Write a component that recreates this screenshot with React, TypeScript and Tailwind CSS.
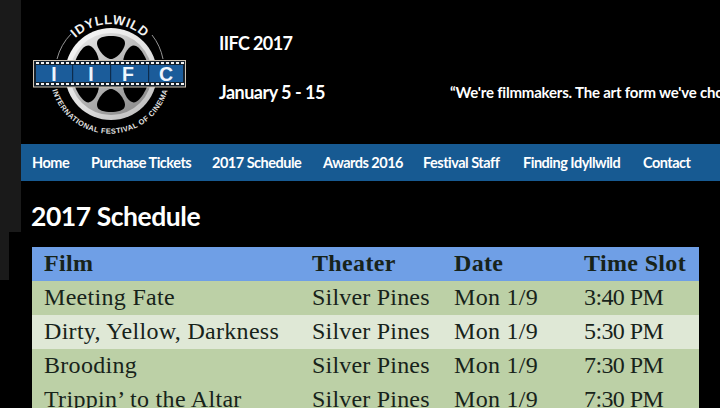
import React from "react";

const nav = [
  { label: "Home", w: "w-[59px]" },
  { label: "Purchase Tickets", w: "w-[121px]" },
  { label: "2017 Schedule", w: "w-[111px]" },
  { label: "Awards 2016", w: "w-[100px]" },
  { label: "Festival Staff", w: "w-[100px]" },
  { label: "Finding Idyllwild", w: "w-[120px]" },
  { label: "Contact", w: "w-[60px]" },
];

const rows = [
  { film: "Meeting Fate", time: "3:40 PM", bg: "bg-[#bcd0a6]" },
  { film: "Dirty, Yellow, Darkness", time: "5:30 PM", bg: "bg-[#dfe8d6]" },
  { film: "Brooding", time: "7:30 PM", bg: "bg-[#bcd0a6]" },
  { film: "Trippin’ to the Altar", time: "7:30 PM", bg: "bg-[#bcd0a6]" },
];

const HOLE = "M0,-15 C6,-15 14,-25 14,-31 C14,-37 6,-38 0,-38 C-6,-38 -14,-37 -14,-31 C-14,-25 -6,-15 0,-15 Z";

function Logo() {
  const perfs = Array.from({ length: 30 }, (_, i) => 36 + i * 5);
  return (
    <svg width="180" height="144" viewBox="21 0 180 144" className="shrink-0">
      <defs>
        <linearGradient id="reel" x1="0.15" y1="0.05" x2="0.85" y2="0.95">
          <stop offset="0" stopColor="#f6f6f6" />
          <stop offset="0.6" stopColor="#dedede" />
          <stop offset="1" stopColor="#bdbdbd" />
        </linearGradient>
        <linearGradient id="reelInner" x1="0.1" y1="0" x2="0.9" y2="1">
          <stop offset="0" stopColor="#ececec" />
          <stop offset="0.5" stopColor="#b4b4b4" />
          <stop offset="1" stopColor="#868686" />
        </linearGradient>
        <path id="logoTop" d="M60,74 A50 50 0 0 1 160,74" />
        <path id="logoBottom" d="M52,89 A60 60 0 0 0 168,89" />
      </defs>
      <path d="M57,59 A56 56 0 0 1 71,34" fill="none" stroke="#bbb" strokeWidth="0.8" />
      <path d="M152,35 A56 56 0 0 1 163,59" fill="none" stroke="#bbb" strokeWidth="0.8" />
      <circle cx="111" cy="74" r="46" fill="url(#reel)" />
      <circle cx="111" cy="74" r="41" fill="url(#reelInner)" />
      <g transform="translate(111 74)">
        {[0, 60, 120, 180, 240, 300].map((a) => (
          <path key={a} d={HOLE} fill="#000" transform={`rotate(${a})`} />
        ))}
      </g>
      <text fontFamily="'Liberation Sans', sans-serif" fontSize="13" fontWeight="700" fill="#f2f2f2" letterSpacing="0.7" textAnchor="middle">
        <textPath href="#logoTop" startOffset="50%">IDYLLWILD</textPath>
      </text>
      <text fontFamily="'Liberation Sans', sans-serif" fontSize="7.4" fontWeight="700" fill="#e2e2e2" letterSpacing="0.45" textAnchor="middle">
        <textPath href="#logoBottom" startOffset="50%">INTERNATIONAL FESTIVAL OF CINEMA</textPath>
      </text>
      <rect x="33.5" y="60.5" width="152" height="26.5" fill="#14202c" stroke="#cfc4b4" strokeWidth="1" />
      {perfs.map((x) => (
        <g key={x}>
          <rect x={x} y="62" width="3" height="2" fill="#f2f2f2" />
          <rect x={x} y="83" width="3" height="2" fill="#f2f2f2" />
        </g>
      ))}
      <rect x="36" y="65" width="147" height="17" fill="#1b5c9a" />
      {[72, 110, 148].map((x) => (
        <rect key={x} x={x} y="65" width="1.2" height="17" fill="#0d2c4c" />
      ))}
      <g fontFamily="'Liberation Sans', sans-serif" fontSize="19.5" fontWeight="700" fill="#eef6fd" textAnchor="middle">
        <text x="54" y="81">I</text>
        <text x="91" y="81">I</text>
        <text x="128" y="81">F</text>
        <text x="166" y="81">C</text>
      </g>
    </svg>
  );
}

export default function App() {
  return (
    <div className="flex w-[720px] h-[408px] overflow-hidden bg-black font-['Lato',sans-serif]">
      <div className="w-[21px] shrink-0">
        <div className="w-[21px] h-[232px] bg-[#1a1a1a]" />
        <div className="w-[9px] h-[48px] bg-[#1a1a1a]" />
      </div>
      <div className="flex-1 min-w-0">
        <header className="flex h-[144px]">
          <Logo />
          <div className="flex-1 min-w-0 pl-[18px] pt-[31px] text-white overflow-hidden">
            <div className="text-[18px] leading-[24px] font-bold tracking-[-0.6px]">IIFC 2017</div>
            <div className="flex items-center mt-[25px] h-[24px] whitespace-nowrap">
              <span className="w-[231px] shrink-0 text-[18px] font-bold tracking-[-0.5px]">January 5 - 15</span>
              <span className="text-[15px] font-bold tracking-[-0.2px]">“We're filmmakers. The art form we've chosen</span>
            </div>
          </div>
        </header>
        <nav className="flex items-center h-[37px] pl-[11px] bg-[#175a92] text-white text-[14.5px] font-bold tracking-[-0.5px] whitespace-nowrap">
          {nav.map((n) => (
            <a key={n.label} className={`block ${n.w}`}>{n.label}</a>
          ))}
        </nav>
        <h1 className="pl-[10px] pt-[18px] h-[66px] text-[26.5px] leading-[34px] font-bold tracking-[-0.45px] text-white">2017 Schedule</h1>
        <table className="ml-[11px] w-[667px] table-fixed border-collapse font-['Liberation_Serif',serif] text-[#17231a] text-[24px] leading-[30px] tracking-[0.3px]">
          <colgroup>
            <col className="w-[280px]" />
            <col className="w-[142px]" />
            <col className="w-[130px]" />
            <col />
          </colgroup>
          <thead>
            <tr className="h-[34px] bg-[#6f9fe6] text-left font-bold tracking-[0.35px]">
              <th className="pl-[12px] pb-[2px] font-bold">Film</th>
              <th className="pb-[2px] font-bold">Theater</th>
              <th className="pb-[2px] font-bold">Date</th>
              <th className="pb-[2px] font-bold whitespace-nowrap">Time Slot</th>
            </tr>
          </thead>
          <tbody>
            {rows.map((r) => (
              <tr key={r.film} className={`h-[34px] ${r.bg}`}>
                <td className="pl-[12px] pb-[2px] whitespace-nowrap">{r.film}</td>
                <td className="pb-[2px] whitespace-nowrap tracking-[0.2px]">Silver Pines</td>
                <td className="pb-[2px] whitespace-nowrap">Mon 1/9</td>
                <td className="pb-[2px] whitespace-nowrap tracking-[-0.6px]">{r.time}</td>
              </tr>
            ))}
          </tbody>
        </table>
      </div>
    </div>
  );
}
